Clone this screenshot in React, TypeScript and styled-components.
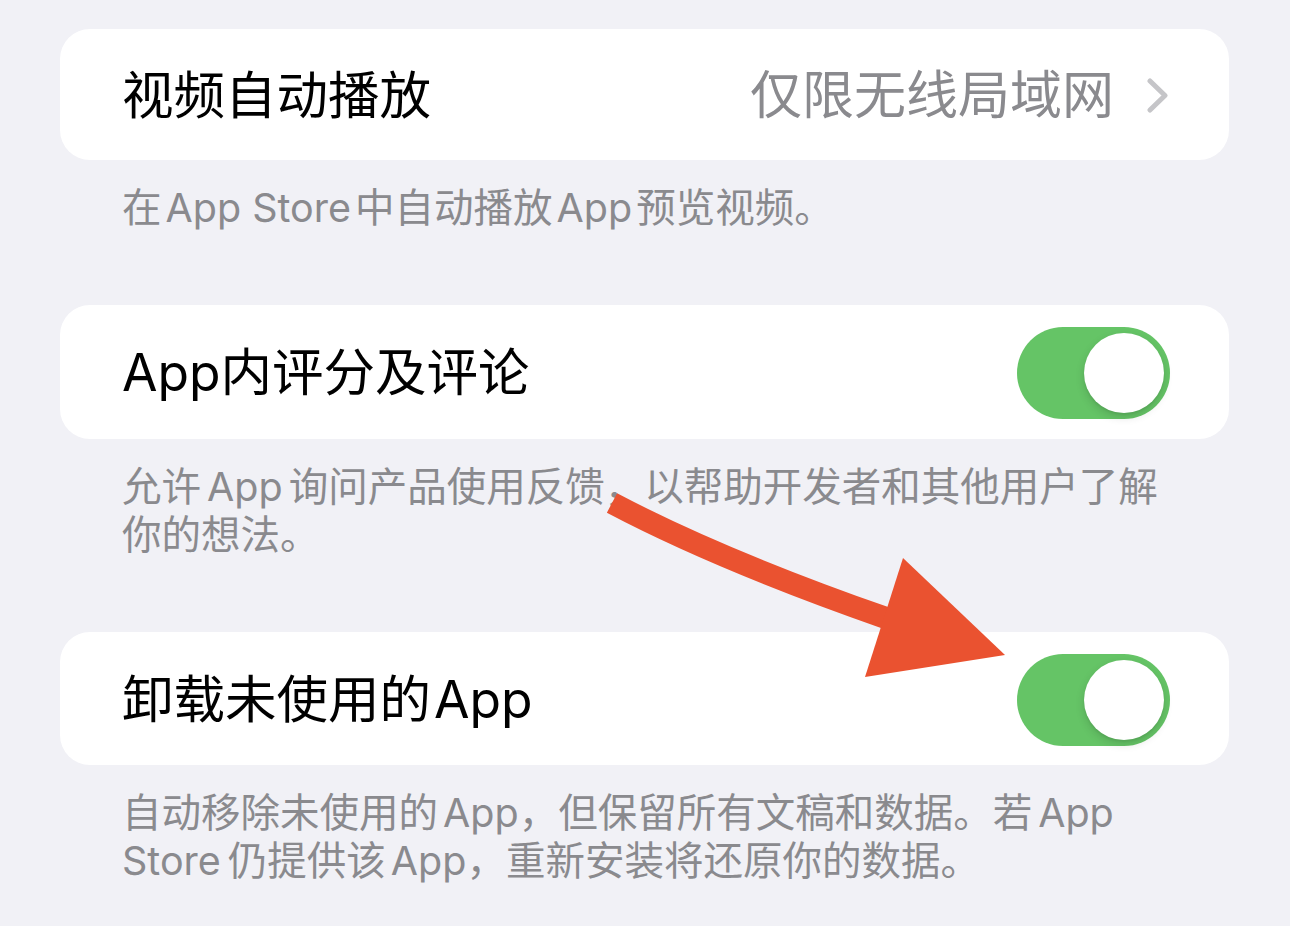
import React from "react";
import styled, { createGlobalStyle } from "styled-components";

const GlobalStyle = createGlobalStyle`
  html, body {
    margin: 0;
    padding: 0;
    background: #f1f1f6;
  }
  body {
    font-family: Inter, "Noto Sans CJK SC", "Noto Sans", sans-serif;
    -webkit-font-smoothing: antialiased;
  }
`;

const Page = styled.div`
  position: relative;
  width: 1290px;
  min-height: 926px;
  box-sizing: border-box;
  padding: 29px 61px 0 60px;
  overflow: hidden;
`;

const Card = styled.div<{ $h: number; $pr: number }>`
  height: ${(p) => p.$h}px;
  background: #ffffff;
  border-radius: 30px;
  display: flex;
  align-items: center;
  justify-content: space-between;
  box-sizing: border-box;
  padding: 2px ${(p) => p.$pr}px 0 62px;
`;

const Title = styled.span`
  font-size: 51.5px;
  line-height: 1;
  color: #000000;
  white-space: nowrap;
`;

/* Latin run set between CJK characters, with a little breathing room */
const Latin = styled.span<{ $l?: number; $r?: number }>`
  margin-left: ${(p) => p.$l ?? 0}px;
  margin-right: ${(p) => p.$r ?? 0}px;
`;

const Detail = styled.div`
  display: flex;
  align-items: center;
  gap: 33px;
`;

const Value = styled.span`
  font-size: 52px;
  line-height: 1;
  color: #8a8a8e;
  white-space: nowrap;
`;

const Footer = styled.p`
  margin: 0;
  padding: 24px 62px 73px;
  font-size: 39.5px;
  line-height: 48px;
  color: #8a8a8e;
  white-space: nowrap;
`;

const SwitchTrack = styled.div<{ $on: boolean }>`
  width: 153px;
  height: 92px;
  box-sizing: border-box;
  padding: 6px;
  border-radius: 46px;
  background: ${(p) => (p.$on ? "#65c466" : "#e9e9eb")};
  display: flex;
  justify-content: ${(p) => (p.$on ? "flex-end" : "flex-start")};
  align-items: center;
`;

const SwitchKnob = styled.div`
  width: 80px;
  height: 80px;
  border-radius: 50%;
  background: #ffffff;
  box-shadow: 0 4px 10px rgba(0, 0, 0, 0.14), 0 2px 2px rgba(0, 0, 0, 0.05);
`;

const Overlay = styled.svg`
  position: absolute;
  left: 0;
  top: 0;
  pointer-events: none;
`;

const Chevron = () => (
  <svg width="21" height="35" viewBox="0 0 21 35" fill="none">
    <path
      d="M3 3 L18 17.5 L3 32"
      stroke="#c5c5c8"
      strokeWidth="5"
      strokeLinecap="round"
      strokeLinejoin="round"
    />
  </svg>
);

const Switch = ({ on }: { on: boolean }) => (
  <SwitchTrack $on={on}>
    <SwitchKnob />
  </SwitchTrack>
);

export default function App() {
  return (
    <>
      <GlobalStyle />
      <Page>
        <Card $h={131} $pr={61}>
          <Title>视频自动播放</Title>
          <Detail>
            <Value>仅限无线局域网</Value>
            <Chevron />
          </Detail>
        </Card>
        <Footer>
          在<Latin $l={4} $r={4}>App Store</Latin>中自动播放
          <Latin $l={4} $r={4}>App</Latin>预览视频。
        </Footer>

        <Card $h={134} $pr={59}>
          <Title>
            <Latin>App</Latin>内评分及评论
          </Title>
          <Switch on />
        </Card>
        <Footer>
          允许<Latin $l={6} $r={6}>App</Latin>询问产品使用反馈，以帮助开发者和其他用户了解
          <br />
          你的想法。
        </Footer>

        <Card $h={133} $pr={59}>
          <Title>
            卸载未使用的<Latin $l={3}>App</Latin>
          </Title>
          <Switch on />
        </Card>
        <Footer>
          自动移除未使用的<Latin $l={5}>App</Latin>，但保留所有文稿和数据。若
          <Latin $l={6}>App</Latin>
          <br />
          <Latin $r={7}>Store</Latin>仍提供该<Latin $l={5}>App</Latin>，重新安装将还原你的数据。
        </Footer>

        <Overlay width="1290" height="926" viewBox="0 0 1290 926">
          <path
            d="M612 503 Q720 560 886 618"
            stroke="#ea5230"
            strokeWidth="22"
            fill="none"
          />
          <polygon points="903,558 1005,655 865,677" fill="#ea5230" />
        </Overlay>
      </Page>
    </>
  );
}
